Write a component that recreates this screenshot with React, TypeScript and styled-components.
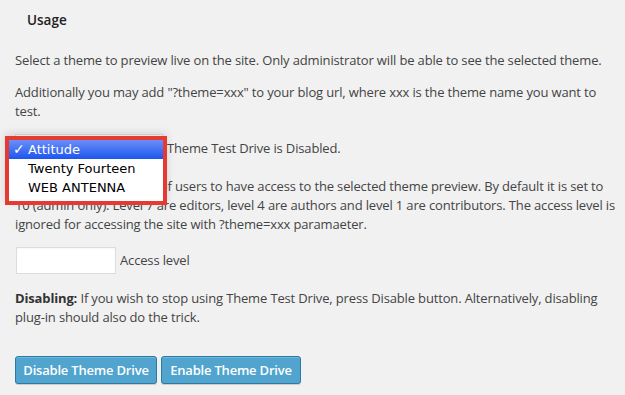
import React from "react";
import styled, { createGlobalStyle } from "styled-components";

const GlobalStyle = createGlobalStyle`
  html, body {
    margin: 0;
    padding: 0;
    background: #f1f1f1;
  }
  body {
    font-family: "Open Sans", "Liberation Sans", sans-serif;
    color: #444;
  }
`;

const Page = styled.div`
  width: 625px;
  height: 395px;
  overflow: hidden;
  padding: 11px 0 0 15px;
  box-sizing: border-box;
  font-size: 13px;
  line-height: 19px;
  letter-spacing: -0.15px;
`;

const Heading = styled.h3`
  margin: 0 0 0 12px;
  font-size: 13.5px;
  font-weight: 600;
  line-height: 18px;
  letter-spacing: 0;
  color: #222;
`;

const Text = styled.p<{ $width: number; $top: number }>`
  margin: ${(p) => p.$top}px 0 0 0;
  width: ${(p) => p.$width}px;
`;

const Lead = styled.span`
  letter-spacing: 0.05px;
`;

const SelectRow = styled.div`
  display: flex;
  align-items: center;
  gap: 4px;
  height: 28px;
  margin-top: 13.5px;
`;

const SelectBox = styled.div`
  position: relative;
  width: 148px;
  height: 28px;
  background: #fff;
  border: 1px solid #ddd;
  box-sizing: border-box;
`;

const Menu = styled.ul`
  position: absolute;
  left: -11px;
  top: 1px;
  width: 162px;
  margin: 0;
  padding: 0 0 4px;
  list-style: none;
  background: #fff;
  border: 4px solid #e53a32;
  box-sizing: border-box;
  box-shadow: 0 -3px 8px rgba(0, 0, 0, 0.12);
  font-family: "DejaVu Sans", "Liberation Sans", sans-serif;
  font-size: 13px;
  letter-spacing: 0;
  color: #000;
  z-index: 2;
`;

const MenuItem = styled.li<{ $active?: boolean }>`
  display: flex;
  align-items: center;
  height: 19px;
  padding-left: 4px;
  background: ${(p) =>
    p.$active ? "linear-gradient(#6b8ff8, #1d55ee)" : "transparent"};
  color: ${(p) => (p.$active ? "#fff" : "#000")};
`;

const Check = styled.span`
  display: inline-block;
  width: 15px;
  font-size: 14px;
  font-weight: 700;
`;

const Strong = styled.strong`
  font-weight: 700;
  color: #333;
`;

const FieldRow = styled.div`
  display: flex;
  align-items: center;
  gap: 4px;
  margin-top: 13.5px;
`;

const Input = styled.input`
  width: 100px;
  height: 27px;
  box-sizing: border-box;
  border: 1px solid #ddd;
  background: #fff;
  margin: 0 0 0 1px;
  padding: 3px 5px;
  font-family: inherit;
  font-size: 13px;
  outline: none;
  box-shadow: inset 0 1px 2px rgba(0, 0, 0, 0.04);
`;

const ButtonRow = styled.div`
  display: flex;
  gap: 4px;
  margin-top: 29.5px;
`;

const Button = styled.button<{ $width: number }>`
  width: ${(p) => p.$width}px;
  height: 28px;
  margin: 0;
  padding: 0;
  background: #50a4cd;
  border: 1px solid #2b7aa2;
  border-radius: 3px;
  box-shadow: inset 0 1px 0 rgba(140, 205, 235, 0.5), 0 1px 0 rgba(0, 0, 0, 0.15);
  color: #fff;
  font-family: "Open Sans", "Liberation Sans", sans-serif;
  font-size: 13px;
  font-weight: 600;
  letter-spacing: -0.2px;
  cursor: pointer;
`;

const themes = ["Attitude", "Twenty Fourteen", "WEB ANTENNA"];

export default function App() {
  return (
    <Page>
      <GlobalStyle />
      <Heading>Usage</Heading>
      <Text $width={600} $top={21.5}>
        Select a theme to preview live on the site. Only administrator will be
        able to see the selected theme.
      </Text>
      <Text $width={595} $top={13}>
        Additionally you may add "?theme=xxx" to your blog url, where xxx is the
        theme name you want to test.
      </Text>
      <SelectRow>
        <SelectBox>
          <Menu>
            {themes.map((t, i) => (
              <MenuItem key={t} $active={i === 0}>
                <Check>{i === 0 ? "✓" : ""}</Check>
                {t}
              </MenuItem>
            ))}
          </Menu>
        </SelectBox>
        <span>Theme Test Drive is Disabled.</span>
      </SelectRow>
      <Text $width={610} $top={14.5}>
        <Lead>Use this to set the level </Lead>of users to have access to the
        selected theme preview. By default it is set to
        <br />
        10 (admin only). Level 7 are editors, level 4 are authors and level 1
        are contributors. The access level is
        <br />
        ignored for accessing the site with ?theme=xxx paramaeter.
      </Text>
      <FieldRow>
        <Input type="text" />
        <span>Access level</span>
      </FieldRow>
      <Text $width={595} $top={14.5}>
        <Strong>Disabling:</Strong> If you wish to stop using Theme Test Drive,
        press Disable button. Alternatively, disabling plug-in should also do the
        trick.
      </Text>
      <ButtonRow>
        <Button $width={142}>Disable Theme Drive</Button>
        <Button $width={140}>Enable Theme Drive</Button>
      </ButtonRow>
    </Page>
  );
}
